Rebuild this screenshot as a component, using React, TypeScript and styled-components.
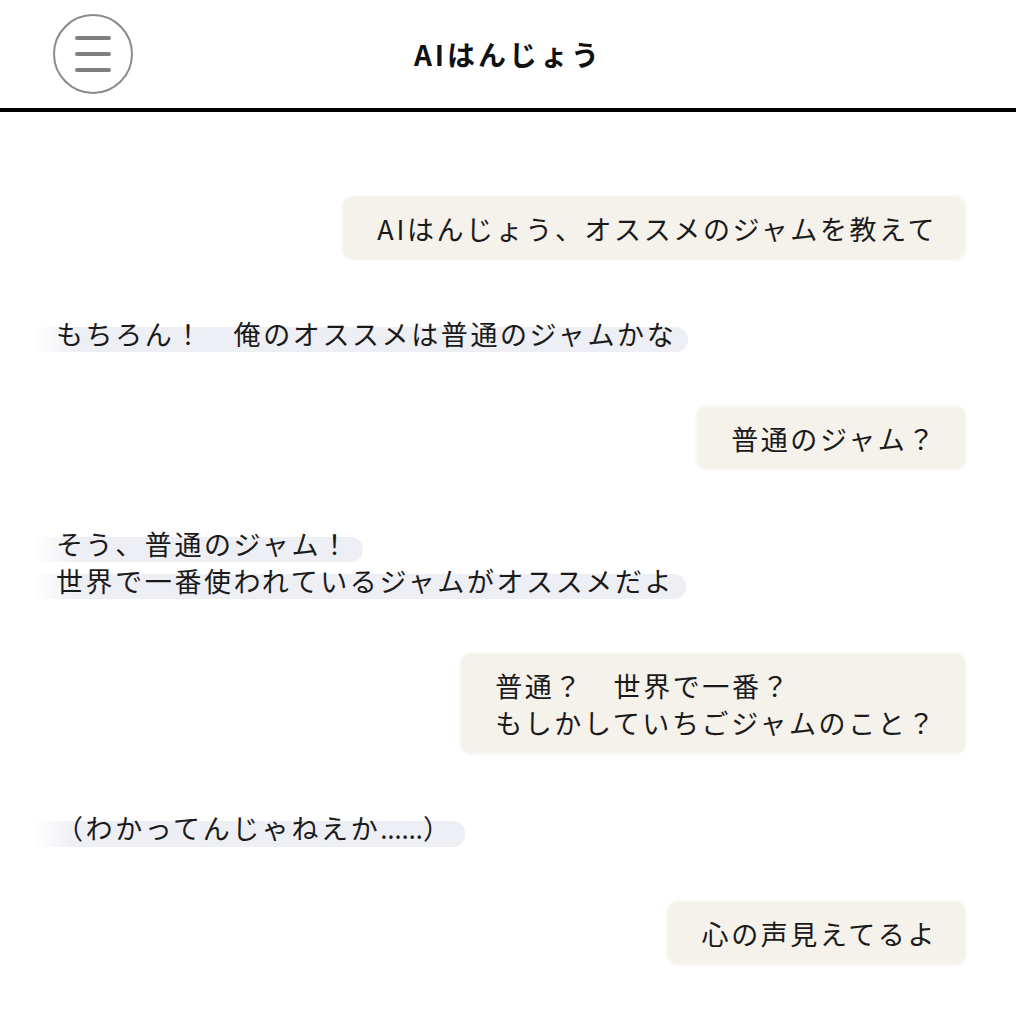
import React from 'react';
import styled, { createGlobalStyle } from 'styled-components';

const GlobalStyle = createGlobalStyle`
  html, body {
    margin: 0;
    padding: 0;
    background: #ffffff;
  }
  body {
    font-family: "Noto Sans CJK JP", "Noto Sans", sans-serif;
    color: #1a1a1a;
  }
  * { box-sizing: border-box; }
`;

const Page = styled.div`
  width: 1016px;
  min-height: 1022px;
  background: #ffffff;
`;

const Header = styled.header`
  height: 112px;
  border-bottom: 4px solid #000000;
  display: grid;
  grid-template-columns: 1fr auto 1fr;
  align-items: center;
`;

const MenuButton = styled.button`
  justify-self: start;
  margin-left: 53px;
  width: 80px;
  height: 80px;
  border-radius: 50%;
  border: 2px solid #8a8a8a;
  background: #ffffff;
  padding: 0;
  display: flex;
  flex-direction: column;
  align-items: center;
  justify-content: center;
  gap: 12px;
  cursor: pointer;
`;

const MenuLine = styled.span`
  display: block;
  width: 36px;
  height: 4px;
  border-radius: 2px;
  background: #808080;
`;

const Title = styled.h1`
  margin: 0;
  font-size: 28px;
  font-weight: 700;
  letter-spacing: 3px;
  color: #111111;
`;

const Chat = styled.main`
  display: flex;
  flex-direction: column;
  gap: 55.5px;
  padding: 85px 51px 40px 56px;
`;

const UserBubble = styled.div`
  align-self: flex-end;
  background: #f5f1eb;
  border-radius: 10px;
  box-shadow: 0 0 3px 1px #f5f1eb;
  padding: 12.5px 28px 12.5px 34px;
  font-size: 27px;
  line-height: 37px;
  letter-spacing: 2.6px;
  color: #1a1a1a;
`;

const AiMessage = styled.div`
  align-self: flex-start;
  display: flex;
  flex-direction: column;
  align-items: flex-start;
  font-size: 27px;
  line-height: 37px;
  letter-spacing: 2.6px;
  color: #1a1a1a;
`;

const AiLine = styled.span`
  position: relative;
  z-index: 0;
  display: inline-block;
  &::before {
    content: '';
    position: absolute;
    left: -22px;
    right: -12px;
    top: 12px;
    bottom: 0px;
    border-radius: 0 12px 12px 0;
    background: linear-gradient(to right, rgba(238, 239, 244, 0) 0px, #eeeff4 42px);
    z-index: -1;
  }
`;

const Ellipsis = styled.span`
  font-family: "Noto Sans", "DejaVu Sans", sans-serif;
  letter-spacing: 0;
`;

const UserLine = styled.div``;

type Message = { from: 'user' | 'ai'; lines: React.ReactNode[] };

const messages: Message[] = [
  { from: 'user', lines: ['AIはんじょう、オススメのジャムを教えて'] },
  { from: 'ai', lines: ['もちろん！　俺のオススメは普通のジャムかな'] },
  { from: 'user', lines: ['普通のジャム？'] },
  { from: 'ai', lines: ['そう、普通のジャム！', '世界で一番使われているジャムがオススメだよ'] },
  { from: 'user', lines: ['普通？　世界で一番？', 'もしかしていちごジャムのこと？'] },
  {
    from: 'ai',
    lines: [
      <>
        （わかってんじゃねえか<Ellipsis>……</Ellipsis>）
      </>,
    ],
  },
  { from: 'user', lines: ['心の声見えてるよ'] },
];

export default function App() {
  return (
    <Page>
      <GlobalStyle />
      <Header>
        <MenuButton aria-label="menu">
          <MenuLine />
          <MenuLine />
          <MenuLine />
        </MenuButton>
        <Title>AIはんじょう</Title>
        <div />
      </Header>
      <Chat>
        {messages.map((m, i) =>
          m.from === 'user' ? (
            <UserBubble key={i}>
              {m.lines.map((l, j) => (
                <UserLine key={j}>{l}</UserLine>
              ))}
            </UserBubble>
          ) : (
            <AiMessage key={i}>
              {m.lines.map((l, j) => (
                <AiLine key={j}>{l}</AiLine>
              ))}
            </AiMessage>
          )
        )}
      </Chat>
    </Page>
  );
}
